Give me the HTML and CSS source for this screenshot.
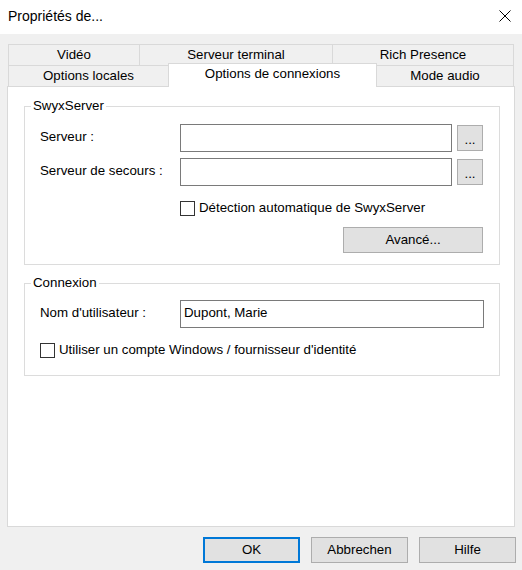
FILE: index.html
```html
<!DOCTYPE html>
<html lang="fr">
<head>
<meta charset="utf-8">
<title>Propriétés de...</title>
<link rel="stylesheet" href="styles.css">
</head>
<body>
<div class="window">
  <div class="titlebar">
    <span class="title">Propriétés de...</span>
    <svg class="close" width="12" height="12" viewBox="0 0 12 12"><path d="M0.5 0.5 L11.5 11.5 M11.5 0.5 L0.5 11.5" stroke="#000" stroke-width="1" fill="none"/></svg>
  </div>
  <div class="dialog">
    <div class="tabs">
      <div class="tabrow row1">
        <div class="tab t-video">Vidéo</div>
        <div class="tab t-term">Serveur terminal</div>
        <div class="tab t-rich">Rich Presence</div>
      </div>
      <div class="tabrow row2">
        <div class="tab t-loc">Options locales</div>
        <div class="tab t-conn selected">Options de connexions</div>
        <div class="tab t-audio">Mode audio</div>
      </div>
    </div>
    <div class="panel">
      <div class="group g1">
        <div class="legend">SwyxServer</div>
        <div class="row first">
          <label class="lbl">Serveur :</label>
          <input class="textbox tb-server" type="text">
          <button class="btn browse">...</button>
        </div>
        <div class="row second">
          <label class="lbl">Serveur de secours :</label>
          <input class="textbox tb-server" type="text">
          <button class="btn browse">...</button>
        </div>
        <div class="check indent">
          <input type="checkbox" class="cb">
          <span>Détection automatique de SwyxServer</span>
        </div>
        <div class="advrow">
          <button class="btn adv">Avancé...</button>
        </div>
      </div>
      <div class="group g2">
        <div class="legend">Connexion</div>
        <div class="row user">
          <label class="lbl">Nom d'utilisateur :</label>
          <input class="textbox tb-user" type="text" value="Dupont, Marie">
        </div>
        <div class="check win">
          <input type="checkbox" class="cb">
          <span>Utiliser un compte Windows / fournisseur d'identité</span>
        </div>
      </div>
    </div>
    <div class="buttons">
      <button class="btn dlg default">OK</button>
      <button class="btn dlg">Abbrechen</button>
      <button class="btn dlg">Hilfe</button>
    </div>
  </div>
</div>
</body>
</html>
```

FILE: styles.css
```css
* { box-sizing: border-box; }
html, body { margin: 0; padding: 0; }
body {
  width: 522px;
  height: 570px;
  background: #f0f0f0;
  font-family: "Liberation Sans", Arial, sans-serif;
  font-size: 13.3px;
  color: #000;
  overflow: hidden;
}
.window { width: 522px; height: 570px; }
.titlebar {
  height: 34px;
  background: #fff;
  display: flex;
  align-items: center;
  justify-content: space-between;
  padding: 0 11px 0 8px;
}
.title { font-size: 14px; line-height: 18px; margin-top: -2px; }
.close { display: block; margin-top: -3px; }

.dialog { padding: 10px 0 0 7px; }
.tabs { margin-left: 1px; }
.tabrow { display: flex; }
.tab {
  border: 1px solid #d9d9d9;
  border-bottom: none;
  background: #f0f0f0;
  text-align: center;
  line-height: 20px;
  white-space: nowrap;
}
.row1 .tab { height: 21px; }
.row1 .tab + .tab, .row2 .tab + .tab { margin-left: -1px; }
.t-video { width: 132px; }
.t-term { width: 194px; }
.t-rich { width: 182px; }
.row2 { align-items: flex-end; height: 21px; }
.row2 .tab { height: 21px; }
.t-loc { width: 161px; }
.t-conn { width: 209px; }
.t-audio { width: 138px; }
.row2 .selected {
  height: 24px;
  margin-bottom: -1px;
  background: #fff;
  line-height: 19px;
  position: relative;
  z-index: 1;
}

.panel {
  width: 508px;
  height: 441px;
  border: 1px solid #d9d9d9;
  background: #fff;
  padding-top: 19px;
}
.group {
  margin: 0 0 0 16px;
  width: 476px;
  border: 1px solid #dcdcdc;
  padding: 0 16px 11px 15px;
}
.g2 { margin-top: 18px; padding-bottom: 17px; }
.legend {
  display: table;
  margin: -9px 0 0 -9px;
  padding: 0 2px;
  line-height: 16px;
  background: #fff;
}
.row { display: flex; align-items: center; }
.row.first { margin-top: 10px; }
.row.second { margin-top: 6px; }
.row.user { margin-top: 9px; }
.lbl { width: 140px; flex-shrink: 0; line-height: 16px; margin-top: -2px; }
.textbox {
  height: 28px;
  border: 1px solid #7a7a7a;
  background: #fff;
  font: inherit;
  color: #000;
  padding: 2px 3px 6px;
  margin: 0;
  outline: none;
  flex-shrink: 0;
}
.tb-server { width: 272px; }
.tb-user { width: 304px; }
.btn {
  font: inherit;
  color: #000;
  background: #e1e1e1;
  border: 1px solid #adadad;
  margin: 0;
  padding: 0;
  height: 26px;
  line-height: 22px;
}
.browse { width: 26px; margin-left: 5px; line-height: 20px; padding-top: 4px; }
.check { display: flex; align-items: center; height: 15px; }
.check.indent { margin-top: 15px; padding-left: 140px; }
.check.win { margin-top: 15px; }
.cb {
  appearance: none;
  -webkit-appearance: none;
  width: 15px;
  height: 15px;
  border: 1px solid #333;
  background: #fff;
  margin: 0 4px 0 0;
  flex-shrink: 0;
}
.check span { line-height: 16px; margin-top: -1px; }
.advrow { display: flex; justify-content: flex-end; margin-top: 11px; }
.adv { width: 140px; }

.buttons {
  display: flex;
  justify-content: flex-end;
  gap: 11px;
  margin-top: 10px;
  padding-right: 6px;
}
.dlg { width: 97px; }
.default { border: 2px solid #0078d7; }
```
